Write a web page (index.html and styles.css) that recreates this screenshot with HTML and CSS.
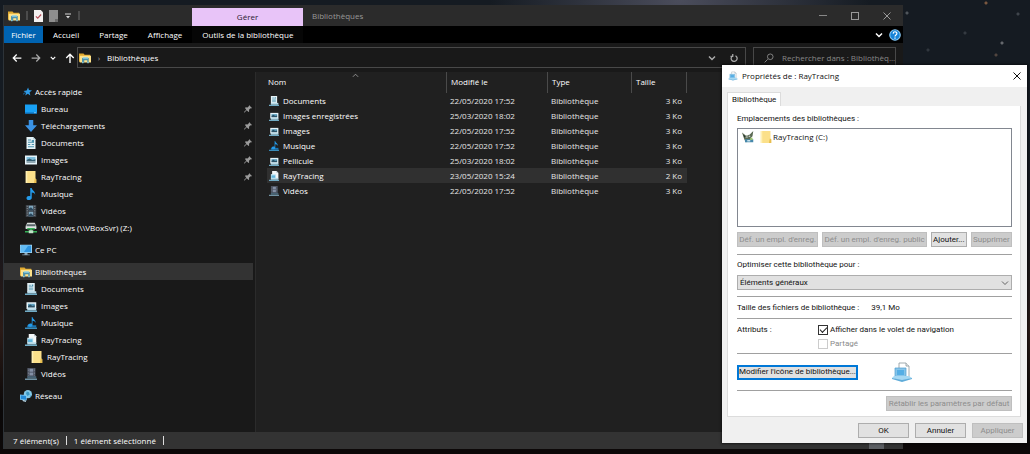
FILE: index.html
```html
<!DOCTYPE html>
<html lang="fr">
<head>
<meta charset="utf-8">
<title>Bibliothèques</title>
<meta name="viewport" content="width=device-width, initial-scale=1">
<link rel="stylesheet" href="styles.css">
</head>
<body>
<svg class="defs" aria-hidden="true">
  <symbol id="i-libs" viewBox="0 0 16 16"><path fill="#e0a92e" d="M0 2h6l1.500 1.500H15V13H0z"/><path fill="#ffe28a" d="M1 5h15v9H1z"/><path fill="#4f93ab" d="M4 8h9v6h-2v-3H7v3H4z"/><path fill="#8fd0e6" d="M5 7h7v2H5z"/><path fill="#7fc6de" d="M4 13h2v2H4zM11 13h2v2h-2z"/></symbol>
  <symbol id="i-folder" viewBox="0 0 16 16"><path fill="#fbe08a" d="M1 0h13v10l1 1v5H1z"/><path fill="#e8bd4e" d="M13 10l2 1v5h-3z"/><path fill="#fff0b5" d="M1 0h2v16H1z"/></symbol>
  <symbol id="i-star" viewBox="0 0 16 16"><path fill="#2f9be6" d="M9 1l1.600 4.500L16 6l-4.300 3.200L13 15l-4.500-3L4 15l1.300-4.800L1 7l5.500-.7z"/><path stroke="#1c74b8" stroke-width="1.500" d="M0 13l5-4"/></symbol>
  <symbol id="i-desk" viewBox="0 0 16 16"><path fill="#18a0f4" d="M0 2h16v12H0z"/><path fill="#0c74c4" d="M0 12.500h16V14H0z"/><path fill="#8fd3fb" d="M12 12.500h3v1h-3z"/></symbol>
  <symbol id="i-down" viewBox="0 0 16 16"><path fill="#3a92e4" d="M5 0h6v7h5l-8 9-8-9h5z"/></symbol>
  <symbol id="i-doc" viewBox="0 0 16 16"><path fill="#e4f1f5" d="M2 0h9l3 3v13H2z"/><path fill="#a8c5d0" d="M11 0l3 3h-3z"/><path stroke="#4b92ad" stroke-width="1.500" d="M4 4h4M4 7h8M4 10h3M9 10h3M4 13h8"/><path fill="#4b92ad" d="M9 4h3v3H9z"/></symbol>
  <symbol id="i-pic" viewBox="0 0 16 16"><path fill="#e6f4fa" d="M0 2h16v12H0z"/><path fill="#7fc0df" d="M2 4h12v4H2z"/><path fill="#355f72" d="M2 8l4-2 4 2 4-1v3H2z"/><path fill="#91a8b2" d="M2 10h12v2H2z"/></symbol>
  <symbol id="i-music" viewBox="0 0 16 16"><path fill="#249bea" d="M7 0h2c0 3 5 4 4.500 9-.5-2-2-3-4.500-3v7c0 4-7 4-7 .5C2 10.500 5 10 7 11z"/></symbol>
  <symbol id="i-video" viewBox="0 0 16 16"><path fill="#3b4148" d="M1 0h14v16H1z"/><path fill="#7fa8be" d="M5 1h6v6H5zM5 9h6v6H5z"/><path fill="#2b485d" d="M5 5l3-2 3 3v1H5zM5 13l3-2 3 3v1H5z"/><path stroke="#a7adb2" stroke-dasharray="1.500 1.500" d="M3 1v14M13 1v14"/></symbol>
  <symbol id="i-drive" viewBox="0 0 16 16"><path fill="#d9dedb" d="M3 1h10l2 4v4H1V5z"/><path fill="#59656a" d="M2 3h12v3H2z"/><path fill="#dfe4e2" d="M1 6h14v3H1z"/><path fill="#36b258" d="M3 8h10v2H9v2h7v2H0v-2h7v-2H3z"/><path fill="#bfe3c8" d="M5 11h6v4H5z"/></symbol>
  <symbol id="i-pc" viewBox="0 0 16 16"><path fill="#a9d9f4" d="M0 1h16v11H0z"/><path fill="#2e94e0" d="M1 2h14v9H1z"/><path fill="#64bcf4" d="M1 2h10L5 11H1z"/><path fill="#8ea9ba" d="M6 12h4v2h3v1H3v-1h3z"/></symbol>
  <symbol id="i-net" viewBox="0 0 16 16"><circle cx="10.500" cy="5.500" r="5.500" fill="#84c8e6"/><path fill="#3b97c4" d="M9 2l3 1 1 3-3 2-2-3zM13 8l2-1-1 3z"/><path fill="#7cc6f2" d="M0 6l9 1v7l-9-1z"/><path fill="#238bd8" d="M1 7l7 1v5l-7-1z"/><path fill="#b2cfdf" d="M3 13l5 1v2l-4-1z"/></symbol>
  <symbol id="stand" viewBox="0 0 16 16"><path fill="#b8dbe8" d="M3 11h12v3H3z"/><path fill="#70acc6" d="M0 14h16v2H0z"/></symbol>
  <symbol id="l-doc" viewBox="0 0 16 16"><path fill="#e4f1f5" d="M3 0h10v12H3z"/><path stroke="#4b92ad" d="M5 3h3M5 5h6M5 7h6M5 9h6"/><path fill="#4b92ad" d="M9 2h2v2H9z"/><use href="#stand"/></symbol>
  <symbol id="l-pic" viewBox="0 0 16 16"><path fill="#e6f4fa" d="M2 3h13v9H2z"/><path fill="#5d9fbd" d="M4 5h9v4H4z"/><path fill="#2c5368" d="M4 8l3-2 3 2 3-1v3H4z"/><use href="#stand"/></symbol>
  <symbol id="l-music" viewBox="0 0 16 16"><path fill="#1774b5" d="M3 11h12v3H3z"/><path fill="#3a8cba" d="M0 14h16v2H0z"/><path fill="#249bea" d="M9 0h1c0 3 5 4 4 8-.5-2-2-3-4-3v6c0 3-6 3-6 0 0-2 3-3 5-2z"/></symbol>
  <symbol id="l-ray" viewBox="0 0 16 16"><path fill="#f4f7f8" d="M5 0h7l3 3v9H5z"/><path fill="#b4c4cc" d="M12 0l3 3h-3z"/><path fill="#c7e7f4" d="M3 5h8v7H3z"/><path fill="#62b6dc" d="M4 7h6v4H4z"/><use href="#stand"/></symbol>
  <symbol id="l-video" viewBox="0 0 16 16"><path fill="#454b59" d="M3 0h11v12H3z"/><path fill="#8490a5" d="M6 1h5v4H6zM6 6h5v4H6z"/><path stroke="#98a1ac" stroke-dasharray="1 1" d="M4.500 1v10M12.500 1v10"/><path fill="#476273" d="M3 11h12v3H3z"/><path fill="#7192a3" d="M0 14h16v2H0z"/></symbol>
  <symbol id="i-ray" viewBox="0 0 22 20"><path fill="#fff" stroke="#8b979d" stroke-width=".8" d="M8 1h7l3 3v11H8z"/><path fill="#eee" stroke="#8b979d" stroke-width=".8" d="M15 1v3h3"/><path fill="#86c4e9" stroke="#4f9ed0" stroke-width=".7" d="M4 6h11v9H4z"/><path fill="#55aee5" d="M6 8h7v5H6z"/><path fill="#a6d8f3" d="M3 14h15l3 2-10 3-10-3z"/><path fill="#60acd9" d="M1 16l10 2 10-2v1l-10 3-10-3z"/></symbol>
  <symbol id="i-pin" viewBox="0 0 16 16"><path fill="#9b9b9b" d="M10 0l6 6-2 1-1-.5-3 3 .3 3.500L9 14l-3.500-3.500L1 15l-1 0 0-1 4.500-4.500L2 6l1.500-1.300L7 5l3-3z"/></symbol>
  <symbol id="i-back" viewBox="0 0 16 16"><path fill="none" stroke="currentColor" stroke-width="2" d="M15 8H2M7.500 2.500L2 8l5.500 5.500"/></symbol>
  <symbol id="i-fwd" viewBox="0 0 16 16"><path fill="none" stroke="currentColor" stroke-width="2" d="M1 8h13M8.500 2.500L14 8l-5.500 5.500"/></symbol>
  <symbol id="i-up" viewBox="0 0 16 16"><path fill="none" stroke="currentColor" stroke-width="2.200" d="M8 16V2M2 8l6-6 6 6"/></symbol>
  <symbol id="i-chev" viewBox="0 0 16 16"><path fill="none" stroke="currentColor" stroke-width="3" d="M2 5l6 6 6-6"/></symbol>
  <symbol id="i-thin" viewBox="0 0 16 16"><path fill="none" stroke="currentColor" stroke-width="1.800" d="M2 5l6 6 6-6"/></symbol>
  <symbol id="i-reload" viewBox="0 0 16 16"><path fill="none" stroke="currentColor" stroke-width="2.500" d="M11 3.500A6 6 0 1 1 5 3.800M5.500 0v4.800H1"/></symbol>
  <symbol id="i-search" viewBox="0 0 16 16"><path fill="none" stroke="currentColor" stroke-width="1.500" d="M6 10L1 15M14.500 6a4.500 4.500 0 1 1-9 0 4.500 4.500 0 1 1 9 0z"/></symbol>
  <symbol id="i-x" viewBox="0 0 16 16"><path fill="none" stroke="currentColor" stroke-width="2" d="M1 1l14 14M15 1L1 15"/></symbol>
  <symbol id="i-help" viewBox="0 0 16 16"><circle cx="8" cy="8" r="7" fill="#1683d8" stroke="#8ac8f2" stroke-width="1.500"/><path fill="none" stroke="#fff" stroke-width="1.600" d="M5.500 6.200c.2-3.400 5-3.200 5-.3C10.500 8 8 8 8 10M8 11.200V13"/></symbol>
  <symbol id="i-qcheck" viewBox="0 0 12 16"><path fill="#f4f1f1" d="M0 0h9l3 3v13H0z"/><path fill="none" stroke="#b44b55" stroke-width="1.500" d="M2.500 8.500L5 11l4.500-5"/></symbol>
  <symbol id="i-qnew" viewBox="0 0 12 16"><path fill="#8e8e8e" d="M0 0h12v13l-2 3H0z"/><path fill="#6b6b6b" d="M8 12h4v4H8z"/></symbol>
  <symbol id="i-qmore" viewBox="0 0 16 16"><path fill="#d8d8d8" d="M2 3h12v2H2zM4 8h8l-4 5z"/></symbol>
  <symbol id="i-gimp" viewBox="0 0 16 16"><path fill="#5b6a53" d="M0 2l5 4 5-1 5-5-1 7-2 2-1 5-6 1-2-4z"/><path fill="#dfe5d8" d="M5 6h3v3H5zM9 6h2v2H9z"/><path fill="#27352c" d="M6 7h1.500v1.500H6zM10 6h1v1h-1zM2 5l3 2-2 2z"/><path fill="#4788aa" d="M4 11h11v4H4z"/><path fill="#9dc56f" d="M11 9h3v3h-3z"/><path fill="#c7e1ed" d="M7 12h4v2H7z"/></symbol>
</svg>

<main class="desktop">
  <section class="explorer">
    <header class="titlebar">
      <div class="quick">
        <svg class="ic"><use href="#i-libs"/></svg><span class="bar"></span>
        <button class="flat" aria-label="Propriétés"><svg class="ic-page"><use href="#i-qcheck"/></svg></button>
        <button class="flat" aria-label="Nouveau dossier"><svg class="ic-page"><use href="#i-qnew"/></svg></button>
        <button class="flat" aria-label="Personnaliser"><svg class="ic-s"><use href="#i-qmore"/></svg></button><span class="bar"></span>
      </div>
      <div class="context">Gérer</div>
      <h1 class="win-title">Bibliothèques</h1>
      <div class="win-buttons">
        <button class="flat" aria-label="Réduire"><span class="g-min"></span></button>
        <button class="flat" aria-label="Agrandir"><span class="g-max"></span></button>
        <button class="flat" aria-label="Fermer"><svg class="ic-s"><use href="#i-x"/></svg></button>
      </div>
    </header>

    <nav class="ribbon">
      <button class="tab tab-file">Fichier</button>
      <button class="tab">Accueil</button>
      <button class="tab">Partage</button>
      <button class="tab">Affichage</button>
      <button class="tab tab-tools">Outils de la bibliothèque</button>
      <span class="ribbon-end">
        <button class="flat" aria-label="Développer le ruban"><svg class="ic-s"><use href="#i-chev"/></svg></button>
        <button class="flat" aria-label="Aide"><svg class="ic"><use href="#i-help"/></svg></button>
      </span>
    </nav>

    <div class="address">
      <div class="moves">
        <button class="flat" aria-label="Précédent"><svg class="ic-m"><use href="#i-back"/></svg></button>
        <button class="flat off" aria-label="Suivant"><svg class="ic-m"><use href="#i-fwd"/></svg></button>
        <button class="flat" aria-label="Récents"><svg class="ic-xs"><use href="#i-chev"/></svg></button>
        <button class="flat" aria-label="Monter"><svg class="ic-m"><use href="#i-up"/></svg></button>
      </div>
      <div class="path">
        <svg class="ic"><use href="#i-libs"/></svg><span class="crumb-sep">›</span><span class="crumb">Bibliothèques</span>
        <button class="flat dim" aria-label="Historique"><svg class="ic-s"><use href="#i-chev"/></svg></button>
        <button class="flat dim" aria-label="Actualiser"><svg class="ic-s"><use href="#i-reload"/></svg></button>
      </div>
      <label class="search"><svg class="ic-m"><use href="#i-search"/></svg><input type="text" aria-label="Rechercher" placeholder="Rechercher dans : Bibliothèq..."></label>
    </div>

    <div class="body">
      <nav class="tree">
        <div class="group">
          <a class="node root" href="#"><svg class="ic-star"><use href="#i-star"/></svg>Accès rapide</a>
          <a class="node" href="#"><svg class="ic"><use href="#i-desk"/></svg>Bureau<svg class="pin"><use href="#i-pin"/></svg></a>
          <a class="node" href="#"><svg class="ic"><use href="#i-down"/></svg>Téléchargements<svg class="pin"><use href="#i-pin"/></svg></a>
          <a class="node" href="#"><svg class="ic"><use href="#i-doc"/></svg>Documents<svg class="pin"><use href="#i-pin"/></svg></a>
          <a class="node" href="#"><svg class="ic"><use href="#i-pic"/></svg>Images<svg class="pin"><use href="#i-pin"/></svg></a>
          <a class="node" href="#"><svg class="ic"><use href="#i-folder"/></svg>RayTracing<svg class="pin"><use href="#i-pin"/></svg></a>
          <a class="node" href="#"><svg class="ic"><use href="#i-music"/></svg>Musique</a>
          <a class="node" href="#"><svg class="ic"><use href="#i-video"/></svg>Vidéos</a>
          <a class="node" href="#"><svg class="ic"><use href="#i-drive"/></svg>Windows (\\VBoxSvr) (Z:)</a>
        </div>
        <div class="group">
          <a class="node root" href="#"><svg class="ic"><use href="#i-pc"/></svg>Ce PC</a>
        </div>
        <div class="group">
          <a class="node root current" href="#"><svg class="ic"><use href="#i-libs"/></svg>Bibliothèques</a>
          <a class="node" href="#"><svg class="ic"><use href="#l-doc"/></svg>Documents</a>
          <a class="node" href="#"><svg class="ic"><use href="#l-pic"/></svg>Images</a>
          <a class="node" href="#"><svg class="ic"><use href="#l-music"/></svg>Musique</a>
          <a class="node" href="#"><svg class="ic"><use href="#l-ray"/></svg>RayTracing</a>
          <a class="node deep" href="#"><svg class="ic"><use href="#i-folder"/></svg>RayTracing</a>
          <a class="node" href="#"><svg class="ic"><use href="#l-video"/></svg>Vidéos</a>
        </div>
        <div class="group">
          <a class="node root" href="#"><svg class="ic"><use href="#i-net"/></svg>Réseau</a>
        </div>
      </nav>

      <div class="content">
        <svg class="sort"><use href="#i-thin"/></svg>
        <table class="files">
          <thead>
            <tr><th class="c-name">Nom</th><th class="c-date">Modifié le</th><th class="c-type">Type</th><th class="c-size">Taille</th></tr>
          </thead>
          <tbody>
            <tr><td><span class="file"><svg class="ic-m"><use href="#l-doc"/></svg>Documents</span></td><td>22/05/2020 17:52</td><td>Bibliothèque</td><td>3 Ko</td></tr>
            <tr><td><span class="file"><svg class="ic-m"><use href="#l-pic"/></svg>Images enregistrées</span></td><td>25/03/2020 18:02</td><td>Bibliothèque</td><td>3 Ko</td></tr>
            <tr><td><span class="file"><svg class="ic-m"><use href="#l-pic"/></svg>Images</span></td><td>22/05/2020 17:52</td><td>Bibliothèque</td><td>3 Ko</td></tr>
            <tr><td><span class="file"><svg class="ic-m"><use href="#l-music"/></svg>Musique</span></td><td>22/05/2020 17:52</td><td>Bibliothèque</td><td>3 Ko</td></tr>
            <tr><td><span class="file"><svg class="ic-m"><use href="#l-pic"/></svg>Pellicule</span></td><td>25/03/2020 18:02</td><td>Bibliothèque</td><td>3 Ko</td></tr>
            <tr class="selected"><td><span class="file"><svg class="ic-m"><use href="#l-ray"/></svg>RayTracing</span></td><td>23/05/2020 15:24</td><td>Bibliothèque</td><td>2 Ko</td></tr>
            <tr><td><span class="file"><svg class="ic-m"><use href="#l-video"/></svg>Vidéos</span></td><td>22/05/2020 17:52</td><td>Bibliothèque</td><td>3 Ko</td></tr>
          </tbody>
        </table>
      </div>
    </div>

    <footer class="status">
      <span class="stat">7 élément(s)</span><span class="stat">1 élément sélectionné</span>
      <span class="view-mode"></span>
    </footer>
  </section>

  <section class="dialog" role="dialog" aria-labelledby="dlg-title">
    <header class="dlg-head">
      <svg class="ic-m"><use href="#i-ray"/></svg><h2 class="dlg-title" id="dlg-title">Propriétés de : RayTracing</h2>
      <button class="flat" aria-label="Fermer"><svg class="ic-s"><use href="#i-x"/></svg></button>
    </header>
    <form class="dlg-body">
      <button type="button" class="dlg-tab">Bibliothèque</button>
      <div class="panel">
        <p class="label">Emplacements des bibliothèques :</p>
        <ul class="places">
          <li class="place"><svg class="ic"><use href="#i-gimp"/></svg><span class="place-name"><svg class="ic"><use href="#i-folder"/></svg>RayTracing (C:)</span></li>
        </ul>
        <div class="btns">
          <button type="button" class="btn" disabled>Déf. un empl. d'enreg.</button>
          <button type="button" class="btn" disabled>Déf. un empl. d'enreg. public</button>
          <button type="button" class="btn">Ajouter...</button>
          <button type="button" class="btn" disabled>Supprimer</button>
        </div>
        <div class="block">
          <label class="label" for="opt">Optimiser cette bibliothèque pour :</label>
          <div class="pick"><select id="opt"><option>Éléments généraux</option></select><svg class="ic-s"><use href="#i-thin"/></svg></div>
        </div>
        <div class="block line"><span class="label">Taille des fichiers de bibliothèque :</span><span>39,1 Mo</span></div>
        <div class="block attrs">
          <span class="label">Attributs :</span>
          <div class="checks">
            <label class="check"><input type="checkbox" checked>Afficher dans le volet de navigation</label>
            <label class="check off"><input type="checkbox" disabled>Partagé</label>
          </div>
        </div>
        <div class="block change"><button type="button" class="btn focus">Modifier l'icône de bibliothèque...</button><svg class="ic-big"><use href="#i-ray"/></svg></div>
        <div class="block reset"><button type="button" class="btn" disabled>Rétablir les paramètres par défaut</button></div>
      </div>
      <div class="actions">
        <button type="button" class="btn">OK</button>
        <button type="button" class="btn">Annuler</button>
        <button type="button" class="btn" disabled>Appliquer</button>
      </div>
    </form>
  </section>
</main>
</body>
</html>
```
FILE: styles.css
```css
* { box-sizing: border-box; }

body {
  margin: 0;
  font: 8px/12px "Open Sans", "Noto Sans", sans-serif;
  color: #fff;
  background: #0b0a0b;
}

h1, h2, p, ul { margin: 0; padding: 0; font: inherit; list-style: none; }
button, input, select { font: inherit; color: inherit; }
svg { display: block; flex: none; }
a { color: inherit; text-decoration: none; }
.defs { position: absolute; width: 0; height: 0; }

.ic { width: 12px; height: 12px; }
.ic-m { width: 10px; height: 10px; }
.ic-s { width: 8px; height: 8px; }
.ic-xs { width: 6px; height: 6px; }
.ic-page { width: 9px; height: 12px; }
.ic-star { width: 9px; height: 9px; }
.ic-big { width: 22px; height: 20px; }

.flat {
  display: flex;
  align-items: center;
  justify-content: center;
  padding: 0;
  border: 0;
  background: none;
}

/* Desktop: night sky over a dark landscape */
.desktop {
  position: relative;
  min-height: 100vh;
  overflow: hidden;
  background:
    radial-gradient(circle at 986px 3px, #7a573f 0 1px, transparent 2px),
    radial-gradient(circle at 1002px 43px, #65686d 0 1px, transparent 2px),
    radial-gradient(circle at 907px 13px, #4f555b 0 1px, transparent 2px),
    radial-gradient(circle at 965px 33px, #343a41 0 1px, transparent 2px),
    radial-gradient(circle at 996px 55px, #51453f 0 1px, transparent 2px),
    radial-gradient(circle at 1018px 14px, #3f454c 0 1px, transparent 2px),
    radial-gradient(circle at 928px 50px, #31373e 0 1px, transparent 2px),
    radial-gradient(ellipse at 680px 0, #4b4d5c 0, transparent 190px),
    linear-gradient(#151b22 0, #151b22 130px, #17161b 240px, #2a1b17 330px, #0a0808 410px, #0c0808);
}

/* Explorer window */
.explorer {
  position: absolute;
  inset: 5px 127px 5px 3px;
  display: flex;
  flex-direction: column;
  background: #191919;
  border-left: 1px solid #2d3338;
}

.titlebar { display: flex; height: 21px; background: #2b2b2b; color: #999; }
.quick { display: flex; align-items: center; gap: 6px; width: 188px; padding-left: 4px; }
.bar { width: 2px; height: 9px; background: #4c4c4c; }
.context {
  width: 111px;
  margin-top: 3px;
  line-height: 18px;
  text-align: center;
  color: #2a2030;
  background: #e8c4f8;
}
.win-title { flex: 1; padding-left: 9px; line-height: 21px; }
.win-buttons { display: flex; }
.win-buttons .flat { width: 32px; color: #9a9a9a; }
.g-min { width: 8px; height: 1px; background: #888; }
.g-max { width: 8px; height: 8px; border: 1px solid #999; }

.ribbon { display: flex; height: 17px; background: #000; }
.tab { padding: 0 10px; border: 0; background: none; line-height: 17px; }
.tab-file { width: 39px; padding: 0; background: #0063b1; }
.tab-tools { width: 111px; padding: 0; text-align: center; background: #060606; }
.ribbon-end { display: flex; gap: 6px; margin-left: auto; padding-right: 2px; }

.address { display: flex; gap: 7px; height: 29px; padding: 4px 7px 4px 8px; }
.moves { display: flex; align-items: center; gap: 9px; width: 58px; color: #fff; }
.moves .off, .dim { color: #aaa; }
.path, .search { display: flex; align-items: center; border: 1px solid #484848; }
.path { flex: 1; gap: 4px; padding: 0 7px 0 1px; }
.crumb-sep { width: 8px; text-align: center; color: #aaa; }
.crumb { flex: 1; }
.path .flat + .flat { margin-left: 10px; }
.search { gap: 8px; width: 143px; padding-left: 10px; color: #888; }
.search input { flex: 1; min-width: 0; padding: 0; border: 0; outline: 0; background: none; }
.search input::placeholder { color: #888; opacity: 1; }

.body { flex: 1; display: flex; min-height: 0; }

.tree {
  display: flex;
  flex-direction: column;
  gap: 5px;
  width: 252px;
  padding: 11px 2px 0 0;
  border-right: 1px solid #2b2b2b;
}
.node {
  display: flex;
  align-items: center;
  gap: 4px;
  height: 17px;
  padding-left: 21px;
}
.root { padding-left: 16px; gap: 3px; }
.root .ic-star { margin-left: 3px; }
.deep { padding-left: 27px; }
.current { background: #333; }
.pin { width: 8px; height: 8px; margin: 0 1px 0 auto; }

.content { position: relative; flex: 1; padding-left: 11px; background: #202020; }
.sort { position: absolute; left: 96px; top: 0; width: 7px; height: 7px; color: #aaa; transform: rotate(180deg); }
.files { width: 420px; table-layout: fixed; border-collapse: separate; border-spacing: 0; }
.files th, .files td { padding: 0; text-align: left; font-weight: 400; white-space: nowrap; }
.files th { height: 21px; padding-bottom: 1px; }
.files th + th { padding-left: 5px; box-shadow: inset 1px 0 #4a4a4a; }
.files td { height: 15px; color: #e6e6e6; }
.files td + td { padding-left: 4px; }
.files td:last-child { padding-right: 5px; text-align: right; }
.c-name { width: 179px; }
.c-date { width: 101px; }
.c-type { width: 84px; }
.files .c-size { box-shadow: inset 1px 0 #4a4a4a, inset -1px 0 #4a4a4a; }
.file { display: flex; align-items: center; gap: 4px; padding-left: 2px; color: #fff; }
.files .c-name { padding-left: 1px; }
.selected { background: #303030; }

.status { display: flex; align-items: center; height: 17px; padding-left: 9px; background: #333; }
.stat { display: flex; align-items: center; }
.stat::after { content: ""; width: 1px; height: 9px; margin: 0 7px; background: #ddd; }
.view-mode { width: 15px; height: 13px; margin: 0 19px 0 auto; align-self: flex-end; background: #5c5f63; }

/* Properties dialog */
.dialog {
  position: absolute;
  top: 65px;
  right: 3px;
  width: 305px;
  color: #111;
  background: #f0f0f0;
  box-shadow: 0 0 2px 1px #00000080;
}
.dlg-head { display: flex; align-items: center; gap: 4px; height: 22px; padding: 0 6px; background: #fff; }
.dlg-title { flex: 1; }
.dlg-body { padding: 5px 4px 5px 5px; font-family: Roboto, "Noto Sans", sans-serif; }
.dlg-tab {
  display: block;
  height: 14px;
  padding: 0 4px;
  border: 1px solid #dcdcdc;
  border-bottom: 0;
  background: #fff;
  line-height: 12px;
}
.panel { margin-right: 2px; padding: 7px 8px 5px 9px; border: 1px solid #dcdcdc; border-top: 0; background: #fff; }
.label { display: block; }
.places { height: 99px; margin-top: 3px; border: 1px solid #828790; }
.place { display: flex; align-items: center; gap: 6px; height: 15px; padding-left: 4px; font-family: "Open Sans", "Noto Sans", sans-serif; }
.place-name { display: flex; align-items: center; gap: 1px; }
.btns { display: flex; gap: 4px; margin: 5px 0 7px; }
.btn {
  flex: 1 1 auto;
  height: 15px;
  padding: 0;
  border: 1px solid #adadad;
  background: #e1e1e1;
  line-height: 12px;
  white-space: nowrap;
}
.btn:disabled { border-color: #bfbfbf; background: #ccc; color: #8c8c8c; }
.block { border-top: 1px solid #a0a0a0; padding: 4px 0; }
.pick { position: relative; margin: 4px 0 2px; }
.pick select { display: block; appearance: none; width: 100%; height: 15px; padding: 0 2px; border: 1px solid #adadad; border-radius: 0; background: #e1e1e1; line-height: 12px; }
.pick svg { position: absolute; right: 3px; top: 4px; color: #555; }
.line { display: flex; gap: 12px; padding: 5px 0 4px; }
.attrs { display: flex; padding: 5px 0 3px; }
.attrs .label { width: 81px; }
.checks { display: grid; gap: 2px; }
.check { display: flex; align-items: center; gap: 2px; }
.check input { appearance: none; width: 10px; height: 10px; margin: 0; border: 1px solid #333; background: #fff; }
.check input:checked::before { content: ""; display: block; width: 6px; height: 3px; margin: 1px; border: solid #222; border-width: 0 0 1px 1px; transform: rotate(-45deg); }
.check.off { color: #8a8a8a; }
.check.off input { border-color: #ccc; }
.change { display: flex; align-items: center; height: 37px; gap: 33px; }
.btn.focus { flex: none; width: 121px; border: 2px solid #0078d7; line-height: 10px; }
.reset { display: flex; justify-content: flex-end; padding: 5px 0 0; }
.reset .btn { flex: none; width: 126px; }
.actions { display: flex; justify-content: flex-end; gap: 6px; margin-top: 6px; }
.actions .btn { flex: none; width: 51px; }
```
